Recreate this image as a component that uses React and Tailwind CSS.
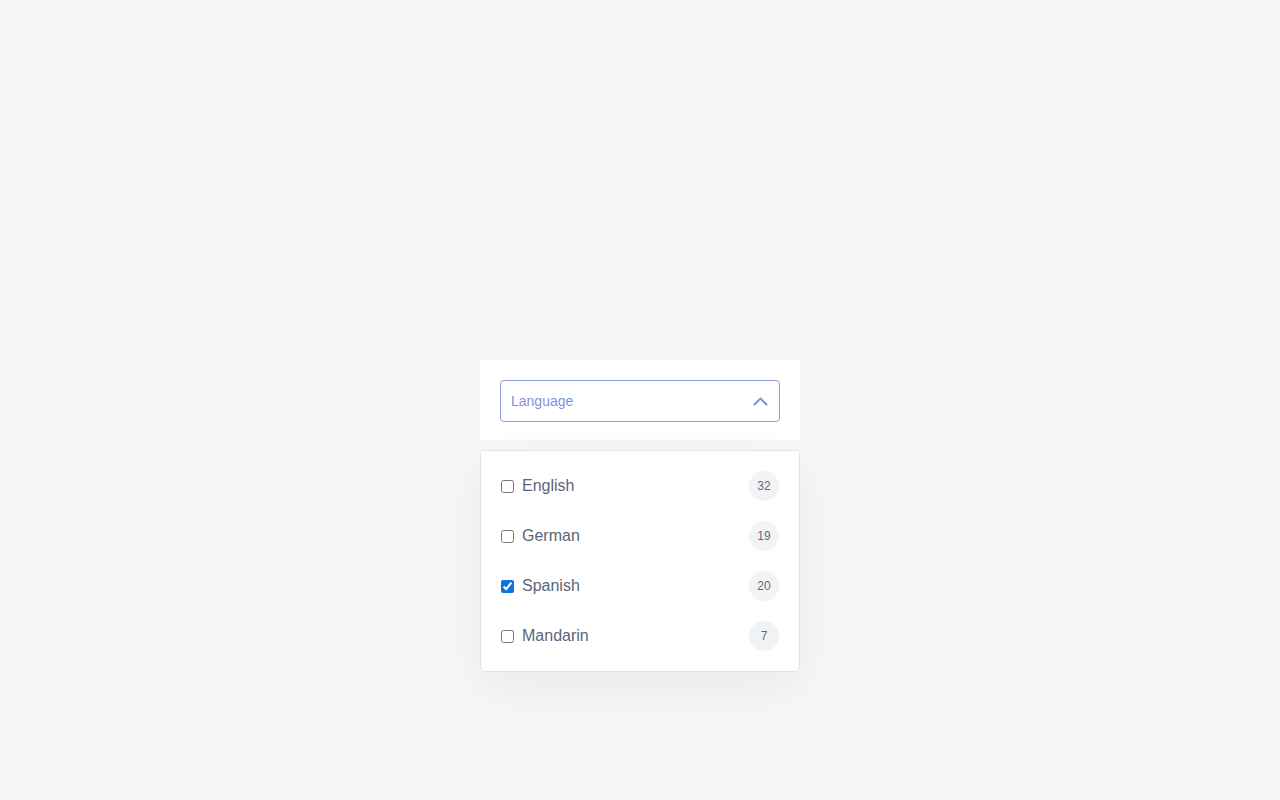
import React from "react";

const items = [
  { label: "English", count: 32, checked: false },
  { label: "German", count: 19, checked: false },
  { label: "Spanish", count: 20, checked: true },
  { label: "Mandarin", count: 7, checked: false },
];

export default function App() {
  return (
    <div
      className="min-h-screen w-full bg-[#f5f6f8] flex flex-col items-center pt-[360px]"
      style={{ fontFamily: '"Liberation Sans", Arial, sans-serif' }}
    >
      <div className="w-[320px] bg-white rounded p-5 pb-[18px]">
        <div className="h-[42px] border border-[#8f9fe3] rounded flex items-center justify-between pl-[10px] pr-[11px]">
          <span className="text-[14px] text-[#7f92e2]">Language</span>
          <svg width="15" height="9" viewBox="0 0 15 9" fill="none">
            <path d="M1.5 7.5L7.5 1.5L13.5 7.5" stroke="#7f92e2" strokeWidth="2" strokeLinecap="round" strokeLinejoin="round" />
          </svg>
        </div>
      </div>
      <div className="mt-[10px] w-[320px] bg-white rounded border border-[#e3e4e8] pt-[10px] pb-[10px] shadow-[0_16px_50px_rgba(0,0,0,0.05)]">
        {items.map((it) => (
          <div key={it.label} className="h-[50px] flex items-center justify-between pl-5 pr-5">
            <label className="flex items-center">
              <input
                type="checkbox"
                defaultChecked={it.checked}
                className="w-[13px] h-[13px] m-0 accent-[#0b72e0]"
              />
              <span className="ml-[8px] text-[16px] text-[#5b6579]">{it.label}</span>
            </label>
            <span className="w-[30px] h-[30px] rounded-full bg-[#f2f3f5] flex items-center justify-center text-[12px] text-[#666b75]">
              {it.count}
            </span>
          </div>
        ))}
      </div>
    </div>
  );
}
